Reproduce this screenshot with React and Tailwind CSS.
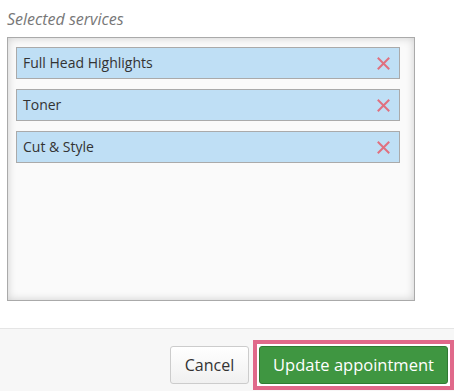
import React from 'react';

const services = ['Full Head Highlights', 'Toner', 'Cut & Style'];

function RemoveIcon() {
  return (
    <svg width="13" height="13" viewBox="0 0 13 13" className="shrink-0">
      <path d="M1.5 1.5 L11.5 11.5 M11.5 1.5 L1.5 11.5" stroke="#e0707f" strokeWidth="2" strokeLinecap="square" />
    </svg>
  );
}

export default function App() {
  return (
    <div className="w-[454px] h-[391px] bg-white flex flex-col overflow-hidden" style={{ fontFamily: '"Open Sans", "Liberation Sans", sans-serif' }}>
      {/* Selected services */}
      <div className="px-[7px] pt-[7px] h-[328px]">
        <div className="text-base leading-6 italic text-[#777]">Selected services</div>
        <div className="mt-[6px] w-[408px] h-[264px] border border-[#aaa] bg-[#fafafa] shadow-[inset_0_0_8px_rgba(0,0,0,0.18)] pl-2 pr-[14px] pt-[9px] flex flex-col gap-[10px]">
          {services.map((s) => (
            <div key={s} className="h-8 border border-[#aaa] bg-[#bfdff5] flex items-center justify-between pl-[6px] pr-[9px] text-sm text-[#333]">
              <span>{s}</span>
              <RemoveIcon />
            </div>
          ))}
        </div>
      </div>

      {/* Footer */}
      <div className="flex-1 border-t border-[#e5e5e5] bg-[#f7f7f7] flex justify-end items-start pt-[11px] gap-1">
        <button className="mt-[6px] h-[38px] w-[79px] rounded-[3px] border border-[#ccc] bg-gradient-to-b from-white to-[#f0f0f0] text-base text-[#333]">
          Cancel
        </button>
        {/* focus highlight */}
        <div className="border-4 border-[#e0698a] bg-white p-[2px]">
          <button className="h-[38px] w-[189px] rounded-[3px] border border-[#2f7a33] bg-[#3f9641] text-[16.5px] text-white">
            Update appointment
          </button>
        </div>
      </div>
    </div>
  );
}
